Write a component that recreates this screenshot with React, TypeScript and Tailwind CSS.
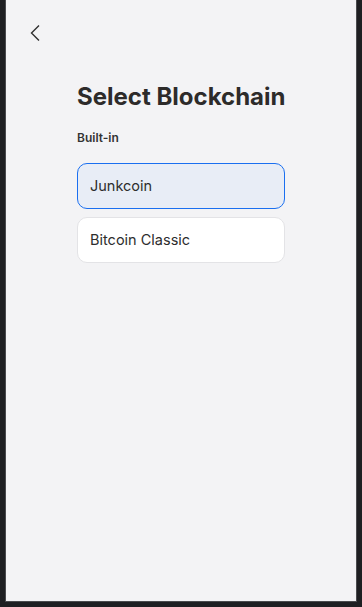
import React from 'react';

const CHAINS = [
  { id: 'junkcoin', label: 'Junkcoin', selected: true },
  { id: 'bitcoin-classic', label: 'Bitcoin Classic', selected: false },
];

export default function App() {
  return (
    <div className="w-[362px] h-[607px] bg-[#1e1f22] flex flex-col" style={{ fontFamily: 'Inter, "Noto Sans", sans-serif' }}>
      <div className="ml-[5px] w-[352px] h-[602px] border border-[#4a4b4e] border-t-0 bg-[#f3f3f5] flex flex-col">
        {/* Back */}
        <div className="pl-[23px] pt-[24px] h-[52px]">
          <svg width="12" height="18" viewBox="0 0 12 18" fill="none" stroke="#2f2f2f" strokeWidth="1.4">
            <path d="M10 1.5 L2.5 9 L10 16.5" />
          </svg>
        </div>

        <div className="px-[71px] pt-[30px]">
          <h1 className="text-[24px] leading-[30px] font-bold text-[#2d2b2a] whitespace-nowrap">Select Blockchain</h1>
          <p className="mt-[18px] text-[12px] leading-[16px] font-semibold text-[#333]">Built-in</p>

          <div className="mt-[17px] flex flex-col gap-[8px]">
            {CHAINS.map((c) => (
              <div
                key={c.id}
                className={`h-[46px] rounded-[10px] border flex items-center px-[12px] text-[14.5px] text-[#2d2d2d] ${
                  c.selected ? 'bg-[#e8edf6] border-[#1a6ff0]' : 'bg-white border-[#e3e3e6]'
                }`}
              >
                {c.label}
              </div>
            ))}
          </div>
        </div>
      </div>
    </div>
  );
}
